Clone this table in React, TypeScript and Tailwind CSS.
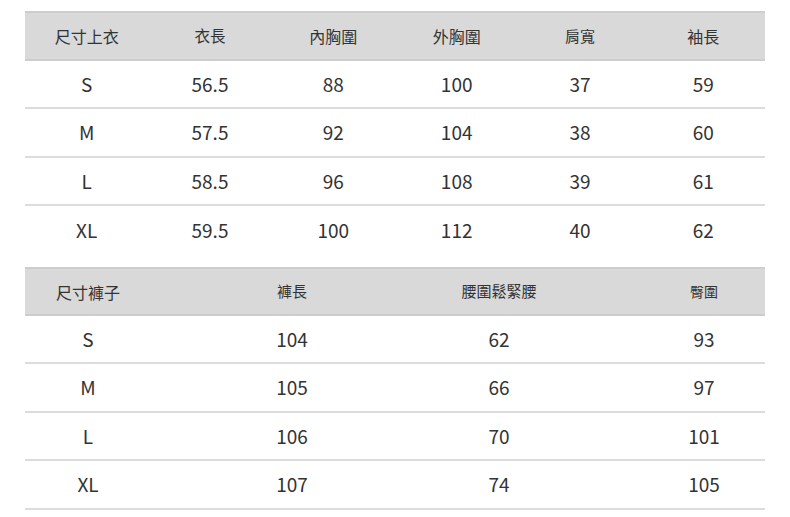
import React from "react";

const font = { fontFamily: '"Noto Sans CJK TC", "Noto Sans", sans-serif' };

const top = {
  head: ["尺寸上衣", "衣長", "內胸圍", "外胸圍", "肩寬", "袖長"],
  headSize: ["text-[16px]", "text-[15.5px]", "text-[16px]", "text-[16px]", "text-[15px]", "text-[16px]"],
  rows: [
    ["S", "56.5", "88", "100", "37", "59"],
    ["M", "57.5", "92", "104", "38", "60"],
    ["L", "58.5", "96", "108", "39", "61"],
    ["XL", "59.5", "100", "112", "40", "62"],
  ],
  heights: ["h-[48px]", "h-[49px]", "h-[48px]", "h-[48px]"],
};

const bottom = {
  head: ["尺寸褲子", "褲長", "腰圍鬆緊腰", "臀圍"],
  headSize: ["text-[16px]", "text-[15px]", "text-[15px]", "text-[14px]"],
  rows: [
    ["S", "104", "62", "93"],
    ["M", "105", "66", "97"],
    ["L", "106", "70", "101"],
    ["XL", "107", "74", "105"],
  ],
  heights: ["h-[48px]", "h-[49px]", "h-[48px]", "h-[49px]"],
};

const colsB = ["w-[126px]", "w-[282px]", "w-[132px]", "w-[200px] pl-[78px]"];

export default function App() {
  return (
    <div className="w-[790px] h-[517px] bg-white text-[#333333]" style={font}>
      <div className="ml-[25px] w-[740px] pt-[11px]">
        {/* Top table */}
        <div className="grid grid-cols-6 items-center h-[50px] bg-[#d9d9d9] border-y-2 border-[#cdcdcd]">
          {top.head.map((h, i) => (
            <div key={i} className={`text-center ${top.headSize[i]}`}>{h}</div>
          ))}
        </div>
        {top.rows.map((r, ri) => (
          <div
            key={ri}
            className={`grid grid-cols-6 items-center ${top.heights[ri]} ${ri < 3 ? "border-b-2 border-[#dcdcdc]" : ""} text-[19px]`}
          >
            {r.map((c, i) => (
              <div key={i} className="text-center">{c}</div>
            ))}
          </div>
        ))}

        {/* Bottom table */}
        <div className="mt-[13px] flex items-center h-[49px] bg-[#d9d9d9] border-y-2 border-[#cdcdcd]">
          {bottom.head.map((h, i) => (
            <div key={i} className={`${colsB[i]} text-center ${bottom.headSize[i]}`}>{h}</div>
          ))}
        </div>
        {bottom.rows.map((r, ri) => (
          <div
            key={ri}
            className={`flex items-center ${bottom.heights[ri]} border-b-2 border-[#dcdcdc] text-[19px]`}
          >
            {r.map((c, i) => (
              <div key={i} className={`${colsB[i]} text-center`}>{c}</div>
            ))}
          </div>
        ))}
      </div>
    </div>
  );
}
